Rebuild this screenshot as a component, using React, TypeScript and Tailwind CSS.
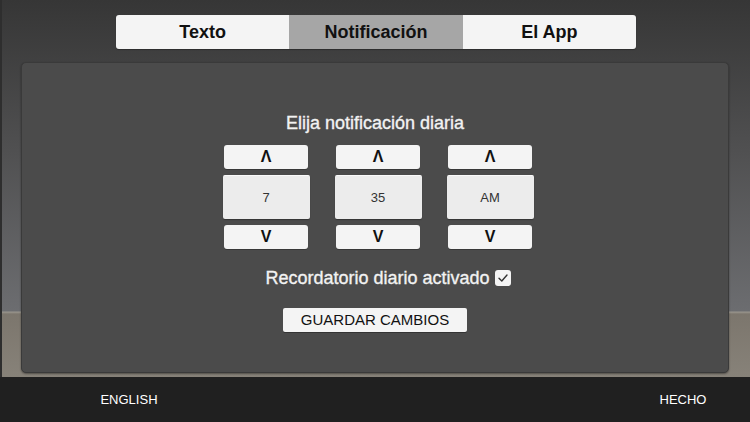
import React from "react";

const Column = ({ value }: { value: string }) => (
  <div className="flex w-[87px] flex-col items-center gap-[6px]">
    <button className="flex h-[24px] w-[84px] items-center justify-center rounded-[3px] bg-[#f4f4f4] text-[16px] font-bold text-[#111] shadow-[0_1px_0_rgba(0,0,0,0.25)]">
      Λ
    </button>
    <div className="flex h-[44px] w-[87px] items-center justify-center rounded-[2px] border-t border-[#fafafa] bg-[#ececec] text-[13px] text-[#333] shadow-[0_1px_1px_rgba(0,0,0,0.3)]">
      {value}
    </div>
    <button className="flex h-[24px] w-[84px] items-center justify-center rounded-[3px] bg-[#f4f4f4] text-[16px] font-bold text-[#111] shadow-[0_1px_0_rgba(0,0,0,0.25)]">
      V
    </button>
  </div>
);

export default function App() {
  return (
    <div className="flex h-[422px] w-[750px] flex-col overflow-hidden [font-family:'Liberation_Sans',Arial,sans-serif]">
      <div className="flex h-[377px] flex-col border-l-2 border-[#2e2e2e] bg-[linear-gradient(to_bottom,#363636_0px,#505051_150px,#6c6d70_311px,#9a968e_312px,#7c766d_314px,#878279_377px)] pt-[15px]">
        <div className="mx-auto flex h-[34px] w-[520px] overflow-hidden rounded-[3px] shadow-[0_1px_1px_rgba(0,0,0,0.3)]">
          <div className="flex flex-1 items-center justify-center bg-[#f4f4f4] text-[18px] font-bold text-[#111]">
            Texto
          </div>
          <div className="flex flex-1 items-center justify-center bg-[#a6a6a6] text-[18px] font-bold text-[#111]">
            Notificación
          </div>
          <div className="flex flex-1 items-center justify-center bg-[#f4f4f4] text-[18px] font-bold text-[#111]">
            El App
          </div>
        </div>
        <div className="ml-[19px] mr-[21px] mt-[13px] flex h-[311px] flex-col items-center rounded-[5px] border border-[#3a3a3a] bg-[#4b4b4b] pt-[50px] shadow-[0_1px_2px_rgba(0,0,0,0.4)]">
          <div className="h-[20px] text-[18px] leading-[20px] text-[#f2f2f2] [-webkit-text-stroke:0.35px_#f2f2f2]">
            Elija notificación diaria
          </div>
          <div className="ml-[6px] mt-[12px] flex gap-[25px]">
            <Column value="7" />
            <Column value="35" />
            <Column value="AM" />
          </div>
          <div className="ml-[26px] mt-[19px] flex h-[20px] items-center gap-[5px]">
            <span className="text-[18px] leading-[20px] text-[#f2f2f2] [-webkit-text-stroke:0.35px_#f2f2f2]">
              Recordatorio diario activado
            </span>
            <span className="flex h-[16px] w-[16px] items-center justify-center rounded-[3px] bg-[#f4f4f4]">
              <svg width="12" height="12" viewBox="0 0 12 12" fill="none">
                <path d="M2 6.2 L4.8 9 L10 3" stroke="#333" strokeWidth="1.4" strokeLinecap="round" strokeLinejoin="round" />
              </svg>
            </span>
          </div>
          <button className="mt-[20px] flex h-[24px] w-[184px] items-center justify-center rounded-[2px] bg-[#f4f4f4] text-[15px] text-[#111] shadow-[0_1px_0_rgba(0,0,0,0.3)]">
            GUARDAR CAMBIOS
          </button>
        </div>
      </div>
      <div className="flex h-[45px] items-center bg-[#202020] text-[13px] text-white">
        <div className="w-[258px] text-center">ENGLISH</div>
        <div className="flex-1" />
        <div className="w-[134px] text-center">HECHO</div>
      </div>
    </div>
  );
}
